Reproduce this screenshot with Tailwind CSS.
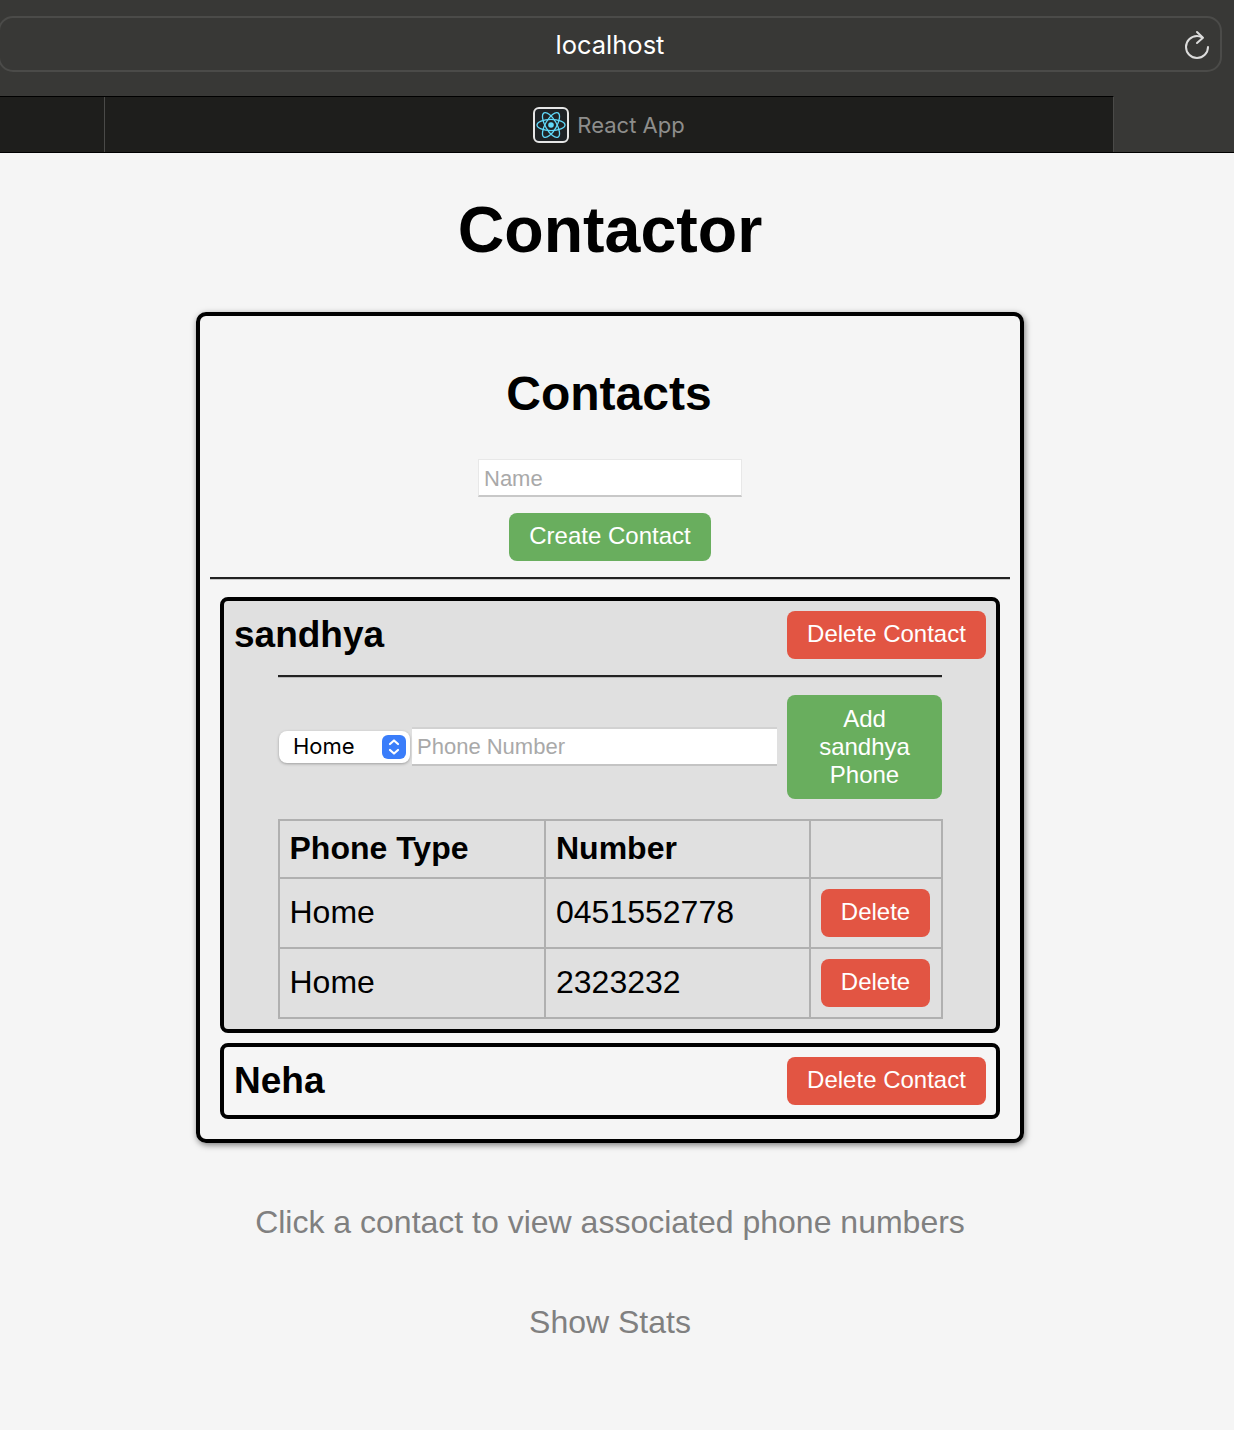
<!DOCTYPE html>
<html lang="en">
<head>
<meta charset="utf-8">
<title>React App</title>
<script src="https://cdn.jsdelivr.net/npm/@tailwindcss/browser@4"></script>
</head>
<body class="m-0 bg-[#f5f5f5] font-['Liberation_Sans',Arial,sans-serif] text-black">
<div class="h-[1430px] w-[1234px] overflow-hidden">
  <header class="h-[153px] bg-[#383836] border-b border-black flex flex-col">
    <div class="relative ml-[-2px] mt-[16px] h-[56px] w-[1224px] rounded-[15px] border-2 border-[#4b4b49] flex items-center justify-center">
      <span class="pt-[2px] font-['Inter',sans-serif] text-[25.5px] leading-none text-white">localhost</span>
      <svg class="absolute right-[9px] top-[11px]" width="28" height="32" viewBox="0 0 28 32" fill="none" stroke="#dcdcdc" stroke-width="2" stroke-linecap="round" stroke-linejoin="round"><path d="M19 8.5 C 17.5 7.6 15.8 7 14 7 A 11 11 0 1 0 25 18"/><path d="M14 3 L20 8.7 L14 14"/></svg>
    </div>
    <div class="mt-[24px] h-[56px] w-[1114px] bg-[#1e1e1c] border-t border-black border-r border-r-[#4a4a48] flex">
      <div class="w-[105px] border-r border-[#4a4a48]"></div>
      <div class="flex-1 flex items-center justify-center gap-[8px]">
        <svg width="36" height="36" viewBox="0 0 36 36" fill="none"><rect x="1" y="1" width="34" height="34" rx="5" fill="#1f2326" stroke="#e6e6e6" stroke-width="2"/><g stroke="#61dafb" stroke-width="1.3"><ellipse cx="18" cy="18" rx="14" ry="5.6"/><ellipse cx="18" cy="18" rx="14" ry="5.6" transform="rotate(60 18 18)"/><ellipse cx="18" cy="18" rx="14" ry="5.6" transform="rotate(120 18 18)"/></g><circle cx="18" cy="18" r="2.8" fill="#61dafb"/></svg>
        <span class="pt-[1px] font-['Inter',sans-serif] text-[22px] leading-none text-[#8e8e8c]">React App</span>
      </div>
    </div>
  </header>

  <main class="w-[1220px] flex flex-col items-center">
    <h1 class="mt-[40px] text-[64.5px] leading-[74px] font-bold">Contactor</h1>

    <section class="mt-[45px] w-[828px] h-[831px] rounded-[10px] border-4 border-black pt-[50px] flex flex-col items-center shadow-[1px_2px_6px_rgba(0,0,0,0.5)]">
      <h2 class="text-[48px] leading-[55px] font-bold pr-[2px]">Contacts</h2>
      <input type="text" placeholder="Name" class="mt-[38px] h-[38px] w-[264px] bg-white border border-[#e8e8e8] border-b-2 border-b-[#c8c8c8] px-[5px] pt-[2px] text-[22px] outline-none placeholder:text-[#a9a9a9]">
      <button class="mt-[16px] h-[48px] w-[202px] rounded-[8px] bg-[#69ae5e] pb-[2px] text-[24px] leading-[28px] text-white">Create Contact</button>
      <hr class="mt-[16px] w-[800px] h-[3px] border-0 border-t-2 border-t-[#222] border-b border-b-[#c8c8c8]">

      <article class="mt-[17px] w-[780px] h-[436px] rounded-[8px] border-4 border-black bg-[#e0e0e0] px-[10px] pt-[10px]">
        <div class="flex items-center justify-between">
          <h3 class="text-[37px] leading-[42px] font-bold">sandhya</h3>
          <button class="h-[48px] w-[199px] rounded-[8px] bg-[#e25543] pb-[2px] text-[24px] leading-[28px] text-white">Delete Contact</button>
        </div>
        <div class="mx-[44px] w-[664px]">
          <hr class="mt-[16px] h-[3px] border-0 border-t-2 border-t-[#222] border-b border-b-[#b8b8b8]">
          <div class="mt-[17px] flex items-center">
            <div class="relative ml-[1px] h-[32px] w-[131px] shrink-0">
              <select class="appearance-none h-full w-full rounded-[8px] bg-white pl-[14px] pb-[2px] font-['Inter',sans-serif] text-[22px] leading-none outline-none shadow-[0_1px_3px_rgba(0,0,0,0.3)]"><option>Home</option></select>
              <span class="absolute right-[4px] top-[4px] flex h-[24px] w-[24px] items-center justify-center rounded-[6px] bg-[#3a7dfa]">
                <svg width="12" height="18" viewBox="0 0 12 18" fill="none" stroke="#fff" stroke-width="2.2" stroke-linecap="round" stroke-linejoin="round"><path d="M2 6 L6 2.5 L10 6"/><path d="M2 12 L6 15.5 L10 12"/></svg>
              </span>
            </div>
            <input type="text" placeholder="Phone Number" class="ml-[2px] mb-[1px] h-[39px] w-[365px] shrink-0 bg-white border-t-2 border-t-[#d2d2d2] border-b-2 border-b-[#c4c4c4] px-[5px] pt-[1px] text-[22px] outline-none placeholder:text-[#a9a9a9]">
            <button class="ml-[10px] h-[104px] w-[155px] shrink-0 rounded-[8px] bg-[#69ae5e] px-[20px] text-[24px] leading-[28px] text-white">Add sandhya Phone</button>
          </div>
          <table class="mt-[20px] w-[663px] table-fixed border-collapse border-2 border-[#b0b0b0] text-[32px] leading-[37px]">
            <colgroup><col class="w-[266px]"><col class="w-[265px]"><col class="w-[132px]"></colgroup>
            <thead>
              <tr class="h-[58px]">
                <th class="border-2 border-[#b0b0b0] pl-[9.5px] pr-[10px] pb-[2px] text-left font-bold">Phone Type</th>
                <th class="border-2 border-[#b0b0b0] px-[10px] pb-[2px] text-left font-bold">Number</th>
                <th class="border-2 border-[#b0b0b0]"></th>
              </tr>
            </thead>
            <tbody>
              <tr class="h-[70px]">
                <td class="border-2 border-[#b0b0b0] pl-[9.5px] pr-[10px] pb-[2px]">Home</td>
                <td class="border-2 border-[#b0b0b0] px-[10px] pb-[2px]">0451552778</td>
                <td class="border-2 border-[#b0b0b0] px-[10px]"><button class="block h-[48px] w-[109px] rounded-[8px] bg-[#e25543] pb-[2px] text-[24px] leading-[28px] text-white">Delete</button></td>
              </tr>
              <tr class="h-[70px]">
                <td class="border-2 border-[#b0b0b0] pl-[9.5px] pr-[10px] pb-[2px]">Home</td>
                <td class="border-2 border-[#b0b0b0] px-[10px] pb-[2px]">2323232</td>
                <td class="border-2 border-[#b0b0b0] px-[10px]"><button class="block h-[48px] w-[109px] rounded-[8px] bg-[#e25543] pb-[2px] text-[24px] leading-[28px] text-white">Delete</button></td>
              </tr>
            </tbody>
          </table>
        </div>
      </article>

      <article class="mt-[10px] w-[780px] h-[76px] rounded-[8px] border-4 border-black px-[10px] pt-[10px]">
        <div class="flex items-center justify-between">
          <h3 class="text-[37px] leading-[42px] font-bold">Neha</h3>
          <button class="h-[48px] w-[199px] rounded-[8px] bg-[#e25543] pb-[2px] text-[24px] leading-[28px] text-white">Delete Contact</button>
        </div>
      </article>
    </section>

    <p class="mt-[61px] text-[32px] leading-[37px] text-[#808080]">Click a contact to view associated phone numbers</p>
    <p class="mt-[63px] text-[32px] leading-[37px] text-[#808080]">Show Stats</p>
  </main>
</div>
</body>
</html>
